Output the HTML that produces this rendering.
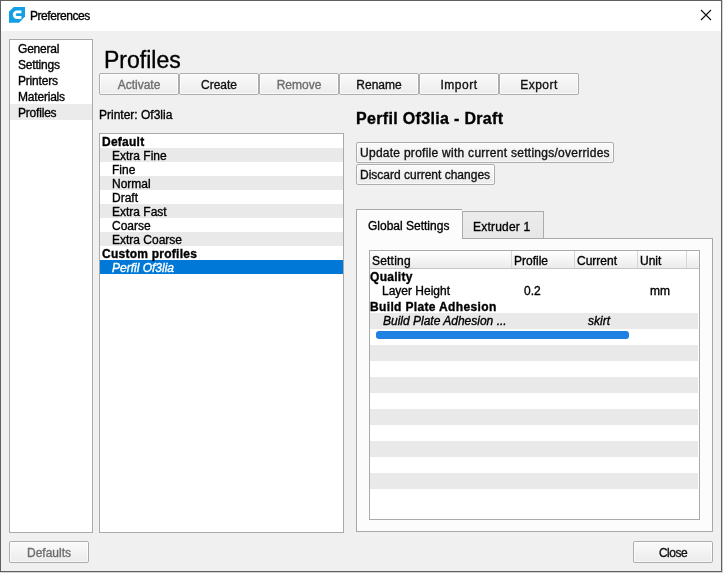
<!DOCTYPE html>
<html><head><meta charset="utf-8">
<style>
*{margin:0;padding:0;box-sizing:border-box}
html,body{width:723px;height:573px;overflow:hidden;background:#d4d4d4}
body{position:relative;font-family:"Liberation Sans",sans-serif;font-size:12px;color:#000}
.a{position:absolute}
.t{position:absolute;white-space:nowrap;line-height:14px;will-change:transform;-webkit-text-stroke:0.35px currentColor}
#win{left:0;top:0;width:722px;height:572px;border:1px solid #5f5f5f;background:#f0f0f0}
#title{left:1px;top:1px;width:720px;height:30px;background:#fff}
.box{background:#fff;border:1px solid #aaaaaa}
.btn{position:absolute;height:22px;border:1px solid #adadad;border-radius:2px;background:linear-gradient(#fafafa,#ececec);box-shadow:inset 0 0 0 1px rgba(255,255,255,.7);text-align:center;line-height:20px;padding-top:1px;white-space:nowrap;color:#111;will-change:transform;-webkit-text-stroke:0.35px currentColor}
.dis{color:#6e6e6e}
.alt{background:#e9e9e9}
.hd{background:#d6d6d6;width:1px;height:17px;top:251px}
</style></head><body>
<div id="win" class="a"></div>
<div id="title" class="a"></div>
<!-- icon -->
<svg class="a" style="left:9px;top:7px" width="16" height="16" viewBox="0 0 16 16">
<path d="M4.8 0H16V9.6L10 15.8H0V4.6Z" fill="#139fe3"/>
<path d="M12.4 4.8H8.1A2.85 2.85 0 0 0 8.1 10.5H12.4" stroke="#fff" stroke-width="2.8" fill="none"/>
</svg>
<div class="t" style="left:30px;top:9px;font-size:12px;letter-spacing:-0.45px">Preferences</div>
<!-- close X -->
<svg class="a" style="left:700px;top:9px" width="12" height="12" viewBox="0 0 12 12"><path d="M1 1L11 11M11 1L1 11" stroke="#111" stroke-width="1.1"/></svg>

<!-- left nav -->
<div class="a box" style="left:9px;top:39px;width:84px;height:494px"></div>
<div class="a" style="left:10px;top:104px;width:82px;height:16px;background:#ebebeb"></div>
<div class="t" style="left:18px;top:41px;font-size:12px;line-height:16px;letter-spacing:-0.2px">General</div>
<div class="t" style="left:18px;top:57px;font-size:12px;line-height:16px;letter-spacing:-0.2px">Settings</div>
<div class="t" style="left:18px;top:73px;font-size:12px;line-height:16px;letter-spacing:-0.2px">Printers</div>
<div class="t" style="left:18px;top:89px;font-size:12px;line-height:16px;letter-spacing:-0.2px">Materials</div>
<div class="t" style="left:18px;top:105px;font-size:12px;line-height:16px;letter-spacing:-0.2px">Profiles</div>

<div class="t" style="left:104px;top:46px;font-size:23px;line-height:28px">Profiles</div>
<div class="btn dis" style="left:99px;top:73px;width:80px">Activate</div>
<div class="btn" style="left:179px;top:73px;width:80px">Create</div>
<div class="btn dis" style="left:259px;top:73px;width:80px">Remove</div>
<div class="btn" style="left:339px;top:73px;width:80px">Rename</div>
<div class="btn" style="left:419px;top:73px;width:80px;letter-spacing:0.5px">Import</div>
<div class="btn" style="left:499px;top:73px;width:80px;letter-spacing:0.5px">Export</div>

<div class="t" style="left:99px;top:108px">Printer: Of3lia</div>

<!-- profiles list -->
<div class="a box" style="left:99px;top:133px;width:245px;height:400px"></div>
<div class="a alt" style="left:100px;top:148px;width:243px;height:14px"></div>
<div class="a alt" style="left:100px;top:176px;width:243px;height:14px"></div>
<div class="a alt" style="left:100px;top:204px;width:243px;height:14px"></div>
<div class="a alt" style="left:100px;top:232px;width:243px;height:14px"></div>
<div class="a" style="left:100px;top:260px;width:243px;height:14px;background:#0078d7"></div>
<div class="t" style="left:102px;top:135px;font-weight:bold;letter-spacing:0.25px">Default</div>
<div class="t" style="left:112px;top:149px">Extra Fine</div>
<div class="t" style="left:112px;top:163px">Fine</div>
<div class="t" style="left:112px;top:177px">Normal</div>
<div class="t" style="left:112px;top:191px">Draft</div>
<div class="t" style="left:112px;top:205px">Extra Fast</div>
<div class="t" style="left:112px;top:219px">Coarse</div>
<div class="t" style="left:112px;top:233px">Extra Coarse</div>
<div class="t" style="left:102px;top:247px;font-weight:bold;letter-spacing:0.25px">Custom profiles</div>
<div class="t" style="left:112px;top:261px;font-style:italic;color:#fff">Perfil Of3lia</div>

<!-- right -->
<div class="t" style="left:356px;top:110px;font-size:16px;line-height:18px;font-weight:bold;letter-spacing:0.33px">Perfil Of3lia - Draft</div>
<div class="btn" style="left:356px;top:142px;width:258px;height:21px;line-height:19px;text-align:left;padding-left:3px;letter-spacing:0.27px">Update profile with current settings/overrides</div>
<div class="btn" style="left:356px;top:164px;width:139px;height:21px;line-height:19px;text-align:left;padding-left:3px">Discard current changes</div>

<!-- tabs -->
<div class="a" style="left:356px;top:238px;width:357px;height:294px;border:1px solid #a8a8a8;background:#fcfcfc"></div>
<div class="a" style="left:462px;top:211px;width:82px;height:27px;border:1px solid #acacac;border-bottom:none;background:linear-gradient(#ececec,#e6e6e6)"></div>
<div class="a" style="left:356px;top:209px;width:106px;height:30px;border:1px solid #a8a8a8;border-right:none;border-bottom:none;background:#fcfcfc"></div>
<div class="t" style="left:368px;top:219px">Global Settings</div>
<div class="t" style="left:473px;top:220px;letter-spacing:0.2px">Extruder 1</div>

<!-- table -->
<div class="a box" style="left:369px;top:250px;width:331px;height:270px"></div>
<div class="a" style="left:370px;top:251px;width:329px;height:18px;background:linear-gradient(#fff,#ebebeb);border-bottom:1px solid #c6c6c6"></div>
<div class="a hd" style="left:511px"></div>
<div class="a hd" style="left:574px"></div>
<div class="a hd" style="left:637px"></div>
<div class="a hd" style="left:686px"></div>
<div class="t" style="left:372px;top:254px;letter-spacing:0.2px">Setting</div>
<div class="t" style="left:514px;top:254px">Profile</div>
<div class="t" style="left:577px;top:254px">Current</div>
<div class="t" style="left:640px;top:254px">Unit</div>

<div class="a alt" style="left:370px;top:313px;width:328px;height:16px"></div>
<div class="a alt" style="left:370px;top:345px;width:328px;height:16px"></div>
<div class="a alt" style="left:370px;top:377px;width:328px;height:16px"></div>
<div class="a alt" style="left:370px;top:409px;width:328px;height:16px"></div>
<div class="a alt" style="left:370px;top:441px;width:328px;height:16px"></div>
<div class="a alt" style="left:370px;top:473px;width:328px;height:16px"></div>

<div class="t" style="left:370px;top:270px;font-weight:bold;letter-spacing:0.3px">Quality</div>
<div class="t" style="left:382px;top:284px">Layer Height</div>
<div class="t" style="left:524px;top:284px">0.2</div>
<div class="t" style="left:650px;top:284px">mm</div>
<div class="t" style="left:370px;top:300px;font-weight:bold;letter-spacing:0.35px">Build Plate Adhesion</div>
<div class="t" style="left:383px;top:314px;font-style:italic">Build Plate Adhesion ...</div>
<div class="t" style="left:588px;top:314px;font-style:italic">skirt</div>
<div class="a" style="left:376px;top:331px;width:253px;height:8px;border-radius:3px;background:#1f82e3"></div>

<!-- bottom buttons -->
<div class="btn dis" style="left:9px;top:541px;width:80px">Defaults</div>
<div class="btn" style="left:633px;top:541px;width:80px;letter-spacing:-0.5px">Close</div>
</body></html>
